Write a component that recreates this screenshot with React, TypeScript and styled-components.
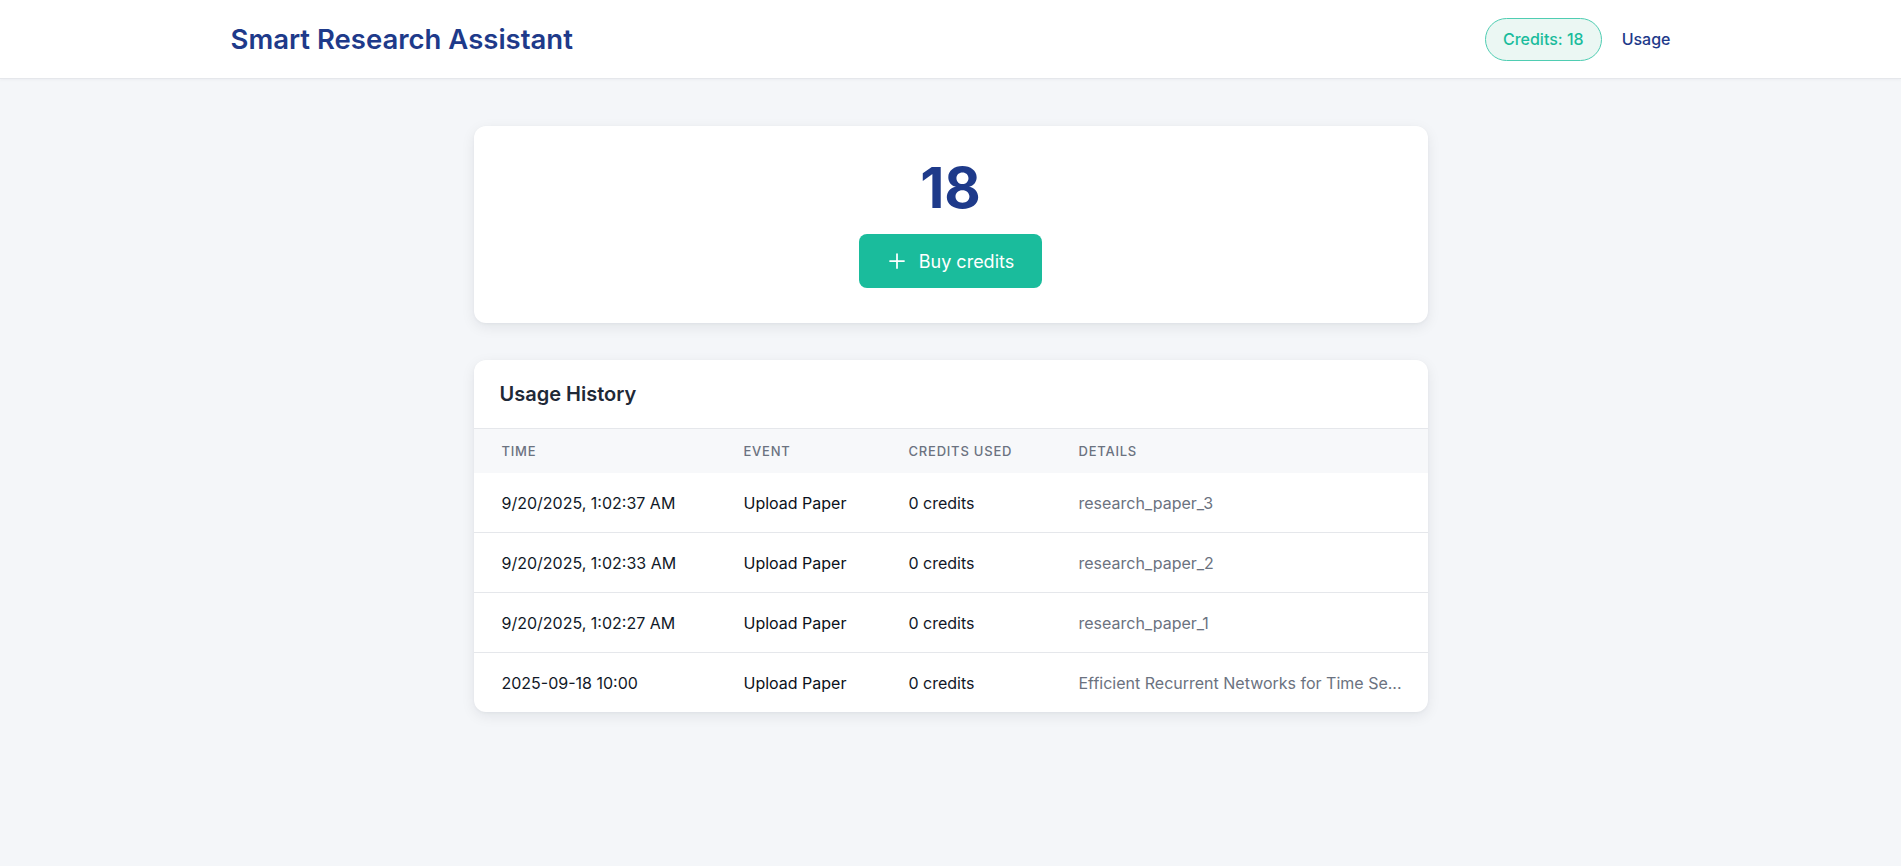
import styled, { createGlobalStyle } from 'styled-components'
import { Plus } from 'lucide-react'

type UsageEntry = {
  id: number
  time: string
  event: string
  credits: number
  details: string
}

const usage: UsageEntry[] = [
  { id: 1, time: '9/20/2025, 1:02:37 AM', event: 'Upload Paper', credits: 0, details: 'research_paper_3' },
  { id: 2, time: '9/20/2025, 1:02:33 AM', event: 'Upload Paper', credits: 0, details: 'research_paper_2' },
  { id: 3, time: '9/20/2025, 1:02:27 AM', event: 'Upload Paper', credits: 0, details: 'research_paper_1' },
  {
    id: 4,
    time: '2025-09-18 10:00',
    event: 'Upload Paper',
    credits: 0,
    details: 'Efficient Recurrent Networks for Time Series Forecasting',
  },
]

const colors = {
  blue: '#1e3a8a',
  teal: '#1abc9c',
  text: '#111827',
  muted: '#6b7280',
  border: '#e5e7eb',
  page: '#f4f6f9',
}

const truncate = (text: string, max = 40) =>
  text.length > max ? `${text.slice(0, max)}...` : text

export default function App() {
  const balance = 18

  return (
    <>
      <GlobalStyle />
      <Header>
        <HeaderInner>
          <Brand>Smart Research Assistant</Brand>
          <Nav>
            <CreditsPill>Credits: {balance}</CreditsPill>
            <NavLink href="#">Usage</NavLink>
          </Nav>
        </HeaderInner>
      </Header>
      <Main>
        <BalanceCard>
          <Balance>{balance}</Balance>
          <BuyButton type="button">
            <Plus size={24} strokeWidth={1.75} />
            Buy credits
          </BuyButton>
        </BalanceCard>

        <HistoryCard>
          <HistoryTitle>Usage History</HistoryTitle>
          <Table>
            <colgroup>
              <col style={{ width: 242 }} />
              <col style={{ width: 165 }} />
              <col style={{ width: 170 }} />
              <col />
            </colgroup>
            <thead>
              <tr>
                <Th>Time</Th>
                <Th>Event</Th>
                <Th>Credits used</Th>
                <Th>Details</Th>
              </tr>
            </thead>
            <tbody>
              {usage.map(entry => (
                <Row key={entry.id}>
                  <Td>{entry.time}</Td>
                  <Td $strong>{entry.event}</Td>
                  <Td>{entry.credits} credits</Td>
                  <Td $muted>{truncate(entry.details)}</Td>
                </Row>
              ))}
            </tbody>
          </Table>
        </HistoryCard>
      </Main>
    </>
  )
}

const GlobalStyle = createGlobalStyle`
  * {
    box-sizing: border-box;
  }

  body {
    margin: 0;
    background: ${colors.page};
    font-family: Inter, 'Noto Sans', sans-serif;
    color: ${colors.text};
    min-height: 100vh;
  }
`

const Header = styled.header`
  height: 79px;
  background: #fff;
  border-bottom: 1px solid ${colors.border};
  box-shadow: 0 1px 3px rgba(15, 23, 42, 0.04);
`

const HeaderInner = styled.div`
  max-width: 1440px;
  height: 100%;
  margin: 0 auto;
  display: flex;
  align-items: center;
  justify-content: space-between;
`

const Brand = styled.h1`
  margin: 0;
  font-size: 27.5px;
  font-weight: 600;
  color: ${colors.blue};
  line-height: 1.2;
`

const Nav = styled.nav`
  display: flex;
  align-items: center;
  gap: 20px;
`

const CreditsPill = styled.span`
  display: inline-flex;
  align-items: center;
  height: 43px;
  padding: 0 17px;
  border-radius: 999px;
  border: 1px solid #4fcdb2;
  background: #ebf7f3;
  color: ${colors.teal};
  font-size: 16px;
  font-weight: 500;
`

const NavLink = styled.a`
  color: ${colors.blue};
  font-size: 16px;
  font-weight: 500;
  text-decoration: none;
`

const Main = styled.main`
  max-width: 954px;
  margin: 0 auto;
  padding: 47px 0;
  display: flex;
  flex-direction: column;
  gap: 37px;
`

const Card = styled.section`
  background: #fff;
  border-radius: 12px;
  box-shadow: 0 4px 14px rgba(15, 23, 42, 0.08), 0 1px 3px rgba(15, 23, 42, 0.04);
`

const BalanceCard = styled(Card)`
  display: flex;
  flex-direction: column;
  align-items: center;
  gap: 18px;
  padding: 34px 0 35px;
`

const Balance = styled.div`
  font-size: 56px;
  font-weight: 700;
  line-height: 1;
  color: ${colors.blue};
`

const BuyButton = styled.button`
  display: inline-flex;
  align-items: center;
  gap: 10px;
  height: 54px;
  padding: 0 28px 0 26px;
  border: none;
  border-radius: 8px;
  background: ${colors.teal};
  color: #fff;
  font-family: inherit;
  font-size: 18px;
  font-weight: 400;
  cursor: pointer;
`

const HistoryCard = styled(Card)`
  overflow: hidden;
`

const HistoryTitle = styled.h2`
  margin: 0;
  padding: 20px 26px;
  font-size: 20px;
  font-weight: 600;
  line-height: 28px;
  color: #1f2937;
  border-bottom: 1px solid ${colors.border};
`

const Table = styled.table`
  width: 100%;
  border-collapse: collapse;
  table-layout: fixed;
`

const Th = styled.th`
  height: 44px;
  padding: 0 28px;
  background: #f7f8fa;
  text-align: left;
  font-size: 13px;
  font-weight: 500;
  letter-spacing: 0.06em;
  text-transform: uppercase;
  color: ${colors.muted};
`

const Row = styled.tr`
  & + & td {
    border-top: 1px solid ${colors.border};
  }
`

type TdProps = {
  $muted?: boolean
  $strong?: boolean
}

const Td = styled.td<TdProps>`
  padding: 17.5px 28px;
  font-size: 16px;
  line-height: 24px;
  font-weight: 400;
  color: ${p => (p.$muted ? colors.muted : p.$strong ? '#0b1120' : colors.text)};
  white-space: nowrap;
  overflow: hidden;
`
